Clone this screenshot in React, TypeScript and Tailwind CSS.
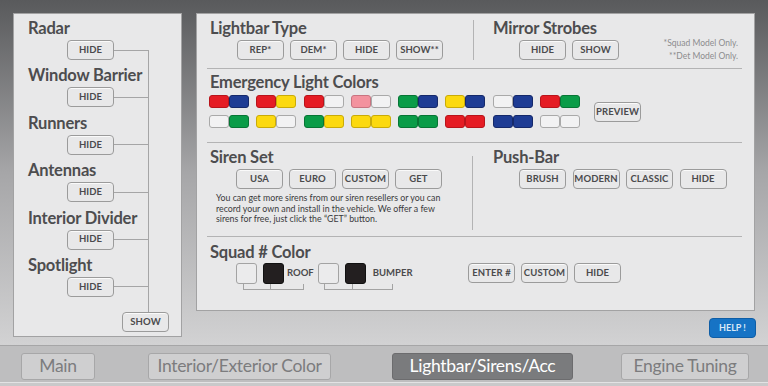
import React from 'react';

const C: Record<string, string> = {
  r: 'bg-[#e51c24] border-[#b8141b]',
  b: 'bg-[#1e3c94] border-[#15296a]',
  y: 'bg-[#fcd90f] border-[#c9ab08]',
  g: 'bg-[#0a9c48] border-[#077535]',
  w: 'bg-[#f2f2f3] border-[#a9a9a9]',
  p: 'bg-[#f3929e] border-[#c87480]',
};

const row1 = ['rb', 'ry', 'rw', 'pw', 'gb', 'yb', 'wb', 'rg'];
const row2 = ['wg', 'yw', 'gy', 'yy', 'gg', 'rr', 'bb', 'ww'];

function Btn({ label, w = 'w-[47px]', className = '' }: { label: string; w?: string; className?: string }) {
  return (
    <div
      className={`${w} h-[20px] shrink-0 rounded-[4px] border border-[#9b9b9b] bg-[#e8e8e9] shadow-[inset_0_1px_0_#fafafa] flex items-center justify-center text-[9.5px] font-bold text-[#4b4b4d] tracking-[0.1px] ${className}`}
    >
      {label}
    </div>
  );
}

function Title({ children, className = '' }: { children: React.ReactNode; className?: string }) {
  return <div className={`h-[18px] leading-[18px] text-[16.5px] font-bold text-[#4d4d4f] tracking-[-0.2px] ${className}`}>{children}</div>;
}

function Pair({ code }: { code: string }) {
  return (
    <div className="flex w-[40px] h-[13px]">
      {code.split('').map((c, i) => (
        <div key={i} className={`w-[20px] h-[13px] rounded-[3px] border ${C[c]}`} />
      ))}
    </div>
  );
}

function Line() {
  return <div className="h-px bg-[#b3b3b4] shrink-0" />;
}

function LeftPanel() {
  const items = ['Radar', 'Window Barrier', 'Runners', 'Antennas', 'Interior Divider', 'Spotlight'];
  return (
    <div className="relative w-[169px] h-[324px] shrink-0 border border-[#a2a2a3] bg-[#e8e8e9] pl-[14px] pt-[5px]">
      <div className="absolute left-[134px] top-[36px] w-px h-[262px] bg-[#a5a5a6]" />
      <div className="flex flex-col gap-[6.4px]">
        {items.map((t) => (
          <div key={t}>
            <Title>{t}</Title>
            <div className="mt-[3px] ml-[39px] flex items-center">
              <Btn label="HIDE" />
              <div className="w-[34px] h-px bg-[#a5a5a6]" />
            </div>
          </div>
        ))}
      </div>
      <div className="mt-[15px] ml-[94px]">
        <Btn label="SHOW" />
      </div>
    </div>
  );
}

function Swatch({ dark }: { dark?: boolean }) {
  return (
    <div
      className={`w-[21px] h-[21px] rounded-[3px] border ${dark ? 'bg-[#231f20] border-[#111]' : 'bg-[#ebebec] border-[#a3a3a3]'}`}
    />
  );
}

function RightPanel() {
  return (
    <div className="w-[559px] h-[298px] border border-[#a2a2a3] bg-[#e8e8e9] pl-[10px] pr-[12px] flex flex-col">
      {/* lightbar type / mirror strobes */}
      <div className="h-[54px] flex shrink-0">
        <div className="w-[266px] pt-[5px]">
          <Title className="pl-[3px]">Lightbar Type</Title>
          <div className="mt-[3px] pl-[30px] flex gap-[6px]">
            <Btn label="REP*" />
            <Btn label="DEM*" />
            <Btn label="HIDE" />
            <Btn label="SHOW**" />
          </div>
        </div>
        <div className="w-px h-[40px] mt-[6px] bg-[#b3b3b4]" />
        <div className="flex-1 pt-[5px] relative">
          <Title className="pl-[19px]">Mirror Strobes</Title>
          <div className="mt-[3px] pl-[45px] flex gap-[6px]">
            <Btn label="HIDE" />
            <Btn label="SHOW" />
          </div>
          <div className="absolute right-[4px] top-[23px] text-right text-[8.5px] leading-[13px] text-[#8c8c8e]">
            <div>*Squad Model Only.</div>
            <div>**Det Model Only.</div>
          </div>
        </div>
      </div>
      <Line />
      {/* emergency light colors */}
      <div className="h-[73px] shrink-0 pt-[4px]">
        <Title className="pl-[3px]">Emergency Light Colors</Title>
        <div className="mt-[4px] pl-[2px] flex items-center">
          <div className="flex flex-col gap-[7px]">
            {[row1, row2].map((row, ri) => (
              <div key={ri} className="flex gap-[7.3px]">
                {row.map((c, i) => (
                  <Pair key={i} code={c} />
                ))}
              </div>
            ))}
          </div>
          <Btn label="PREVIEW" className="ml-[14px] mt-[1px]" />
        </div>
      </div>
      <Line />
      {/* siren set / push-bar */}
      <div className="h-[93px] flex shrink-0">
        <div className="w-[265px] pt-[5px]">
          <Title className="pl-[3px]">Siren Set</Title>
          <div className="mt-[3px] pl-[29px] flex gap-[6px]">
            <Btn label="USA" />
            <Btn label="EURO" />
            <Btn label="CUSTOM" />
            <Btn label="GET" />
          </div>
          <p className="mt-[4px] pl-[9px] text-[8.8px] leading-[10.5px] text-[#3a3a3c] whitespace-nowrap">
            You can get more sirens from our siren resellers or you can
            <br />
            record your own and install in the vehicle. We offer a few
            <br />
            sirens for free, just click the “GET” button.
          </p>
        </div>
        <div className="w-px h-[74px] mt-[13px] bg-[#b3b3b4]" />
        <div className="flex-1 pt-[5px]">
          <Title className="pl-[20px]">Push-Bar</Title>
          <div className="mt-[3px] pl-[46px] flex gap-[6.5px]">
            <Btn label="BRUSH" />
            <Btn label="MODERN" />
            <Btn label="CLASSIC" />
            <Btn label="HIDE" />
          </div>
        </div>
      </div>
      <Line />
      {/* squad # color */}
      <div className="flex-1 pt-[6px]">
        <Title className="pl-[3px]">Squad # Color</Title>
        <div className="mt-[2px] pl-[29px] flex items-start">
          <div className="flex flex-col">
            <div className="flex items-center">
              <Swatch />
              <div className="ml-[6px]">
                <Swatch dark />
              </div>
              <span className="ml-[3px] text-[9.5px] font-bold text-[#4b4b4d]">ROOF</span>
            </div>
            <div className="ml-[7px] flex h-[6px]">
              <div className="w-[27px] border-l border-b border-[#a3a3a3]" />
              <div className="w-[34px] border-l border-r border-b border-[#a3a3a3]" />
            </div>
          </div>
          <div className="ml-[4px] flex flex-col">
            <div className="flex items-center">
              <Swatch />
              <div className="ml-[6px]">
                <Swatch dark />
              </div>
              <span className="ml-[7px] text-[9.5px] font-bold text-[#4b4b4d]">BUMPER</span>
            </div>
            <div className="ml-[6px] flex h-[6px]">
              <div className="w-[28px] border-l border-b border-[#a3a3a3]" />
              <div className="w-[41px] border-l border-r border-b border-[#a3a3a3]" />
            </div>
          </div>
          <div className="ml-auto mr-[121px] flex gap-[6px]">
            <Btn label="ENTER #" />
            <Btn label="CUSTOM" />
            <Btn label="HIDE" />
          </div>
        </div>
      </div>
    </div>
  );
}

function Tab({ label, active, className }: { label: string; active?: boolean; className: string }) {
  return (
    <div
      className={`h-[27px] rounded-[3px] border flex items-center justify-center text-[17.5px] tracking-[-0.3px] ${
        active ? 'bg-[#7a7b7d] border-[#6c6c6e] text-white' : 'bg-[#cfcfd0] border-[#a7a7a8] text-[#7c7c7e]'
      } ${className}`}
    >
      {label}
    </div>
  );
}

export default function App() {
  return (
    <div className="w-[768px] h-[386px] overflow-hidden font-['Lato','Open_Sans',sans-serif] flex flex-col">
      <div className="h-[345px] shrink-0 bg-linear-to-b from-[#595a5c] via-[#a6a6a8] to-[#d2d2d3] pt-[13px] pl-[13px] flex">
        <LeftPanel />
        <div className="ml-[14px] flex flex-col">
          <RightPanel />
          <div className="mt-[7px] flex justify-end pr-0 -mr-px">
            <div className="w-[47px] h-[20px] rounded-[4px] bg-[#1673c5] border border-[#0f5ea6] flex items-center justify-center text-[9px] font-bold text-[#d9e8f7]">
              HELP !
            </div>
          </div>
        </div>
      </div>
      <div className="flex-1 bg-[#bebebf] border-t border-[#a6a6a7] flex flex-col">
        <div className="h-[36px] flex items-center pt-[4px]">
          <Tab label="Main" className="ml-[21px] w-[74px]" />
          <Tab label="Interior/Exterior Color" className="ml-[53px] w-[183px]" />
          <Tab label="Lightbar/Sirens/Acc" active className="ml-[61px] w-[181px]" />
          <Tab label="Engine Tuning" className="ml-[48px] w-[128px]" />
        </div>
        <div className="h-px bg-[#e3e3e4]" />
        <div className="flex-1 bg-[#c9c9ca]" />
      </div>
    </div>
  );
}
